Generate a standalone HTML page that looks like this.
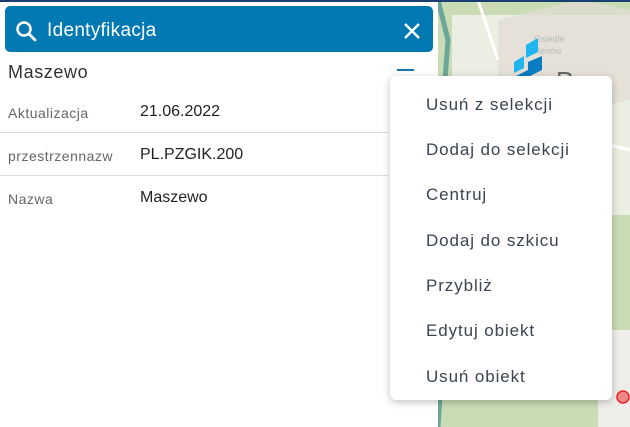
<!DOCTYPE html>
<html><head><meta charset="utf-8"><style>
*{margin:0;padding:0;box-sizing:border-box}
body{width:630px;height:427px;overflow:hidden;position:relative;background:#fff;font-family:"Liberation Sans","DejaVu Sans",sans-serif}
.map{position:absolute;left:438px;top:0;width:192px;height:427px;background:#cfe0c0;overflow:hidden}
.topbar{position:absolute;left:0;top:0;width:630px;height:2px;background:#1a3f72}
.search{position:absolute;left:5px;top:6px;width:428px;height:46px;background:#0279b3;border-radius:5px;color:#fff}
.search .t{position:absolute;left:42px;top:14px;font-size:19px;letter-spacing:0.3px}
.title{position:absolute;left:8px;top:62px;font-size:18px;color:#333;letter-spacing:0.6px}
.row{position:absolute;left:0;width:388px;height:42px;border-bottom:1px solid #ddd}
.row .k{position:absolute;left:8px;top:14px;font-size:14px;color:#666;letter-spacing:0.5px}
.row .v{position:absolute;left:140px;top:12px;font-size:16px;color:#222}
.menu{position:absolute;left:390px;top:76px;width:222px;height:324px;background:#fff;border-radius:6px;box-shadow:0 2px 8px rgba(0,0,0,.25)}
.menu div{position:absolute;left:36px;font-size:17px;color:#3a4452;letter-spacing:0.9px}
</style></head><body>
<div class="map">
<svg width="192" height="427">
<rect width="192" height="427" fill="#c9dcb5"/>
<rect x="14" y="15" width="178" height="200" fill="#eef1e8" opacity=".9"/>
<path d="M0 0 L10 40 L4 120 L10 200 L0 260 L6 330 L0 427" stroke="#6aa79a" stroke-width="5" fill="none"/>
<path d="M60 20 L140 0 L192 10 L192 100 L110 120 L60 80Z" fill="#e2dcd4" opacity=".7"/>
<path d="M70 100 Q110 130 192 150" stroke="#fff" stroke-width="3" fill="none"/>
<path d="M40 0 L60 60" stroke="#fff" stroke-width="3"/>
<text x="118" y="90" font-size="26" fill="#666" font-family="Liberation Sans">Pom</text>
<text x="140" y="116" font-size="26" fill="#333" font-weight="bold" font-family="Liberation Sans">dr</text>
<text x="96" y="42" font-size="9" fill="#bbb" font-family="Liberation Sans">Osiedle</text>
<text x="100" y="54" font-size="9" fill="#bbb" font-family="Liberation Sans">lenów</text>
<polygon points="88,45 100,38 100,52 88,58" fill="#1fb5ee"/>
<polygon points="76,62 86,56 86,68 76,73" fill="#1fb5ee"/>
<polygon points="90,62 104,56 104,70 90,77" fill="#0a7cc4"/>
<polygon points="78,76 90,70 90,80 78,85" fill="#0a7cc4"/>
<rect x="160" y="330" width="32" height="97" fill="#f0eeea"/>
<circle cx="185" cy="397" r="6" fill="#e88" stroke="#e22" stroke-width="1.5"/>
</svg>
</div>
<div class="topbar"></div>
<div class="search">
<svg style="position:absolute;left:10px;top:14px" width="22" height="22"><circle cx="9" cy="9" r="6.5" stroke="#fff" stroke-width="2.5" fill="none"/><path d="M14 14 L20 20" stroke="#fff" stroke-width="2.8" stroke-linecap="round"/></svg>
<div class="t">Identyfikacja</div>
<svg style="position:absolute;left:398px;top:16px" width="18" height="18"><path d="M2 2L16 16M16 2L2 16" stroke="#fff" stroke-width="2.5"/></svg>
</div>
<div class="title">Maszewo</div>
<div style="position:absolute;left:397px;top:69px;width:17px;height:2px;background:#1677b5"></div>
<div class="row" style="top:91px"><span class="k">Aktualizacja</span><span class="v">21.06.2022</span></div>
<div class="row" style="top:134px"><span class="k">przestrzennazw</span><span class="v">PL.PZGIK.200</span></div>
<div class="row" style="top:177px;border:none"><span class="k">Nazwa</span><span class="v">Maszewo</span></div>
<div class="menu">
<div style="top:19px">Usuń z selekcji</div>
<div style="top:64px">Dodaj do selekcji</div>
<div style="top:109px">Centruj</div>
<div style="top:155px">Dodaj do szkicu</div>
<div style="top:200px">Przybliż</div>
<div style="top:245px">Edytuj obiekt</div>
<div style="top:291px">Usuń obiekt</div>
</div>
</body></html>
